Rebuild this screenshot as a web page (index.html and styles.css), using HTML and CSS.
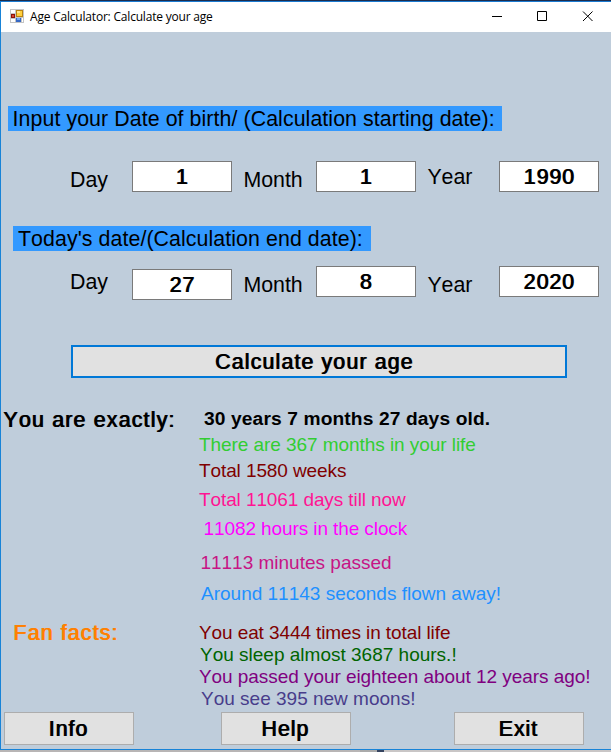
FILE: index.html
```html
<!DOCTYPE html>
<html lang="en">
<head>
<meta charset="utf-8">
<title>Age Calculator: Calculate your age</title>
<link rel="stylesheet" href="styles.css">
</head>
<body>
<div class="window">
  <header class="titlebar">
    <svg class="app-icon" width="14" height="14" viewBox="0 0 14 14" shape-rendering="crispEdges">
      <path fill="#c4c4c4" d="M0 0h14v14H0z"/>
      <path fill="#fff" d="M1 1h4v3H1zM1 10h4v3H1zM12 9h1v4h-1z"/>
      <path fill="#8c1208" d="M1 5h4v4H1z"/><path fill="#d8452f" d="M2 6h2v2H2z"/>
      <path fill="#b88312" d="M6 1h7v7H6z"/><path fill="#ffcf3d" d="M7 2h5v5H7z"/><path fill="#ffe58a" d="M7 2h3v2H7z"/>
      <path fill="#3568c5" d="M6 9h5v4H6z"/><path fill="#75a9f2" d="M7 9h3v2H7z"/>
    </svg>
    <span class="title">Age Calculator: Calculate your age</span>
    <svg class="controls" width="106" height="12" viewBox="0 0 106 12">
      <g fill="none" stroke="#000">
        <path d="M0 5.5h10M45.500 .5h9v9h-9z"/>
        <path d="M91 .5l9.500 9.500M100.500 .5L91 10"/>
      </g>
    </svg>
  </header>
  <main>
    <h2 class="band band-birth">Input your Date of birth/ (Calculation starting date):</h2>
    <div class="fields fields-birth">
      <span class="low">Day</span><div class="box">1</div>
      <span class="low">Month</span><div class="box">1</div>
      <span>Year</span><div class="box">1990</div>
    </div>
    <h2 class="band band-today">Today's date/(Calculation end date):</h2>
    <div class="fields fields-today">
      <span>Day</span><div class="box low">27</div>
      <span class="low">Month</span><div class="box">8</div>
      <span class="low">Year</span><div class="box">2020</div>
    </div>
    <button class="calculate">Calculate your age</button>
    <section class="result">
      <h3 class="exactly">You are exactly:</h3>
      <div class="lines">
        <p class="age">30 years 7 months 27 days old.</p>
        <p class="months">There are 367 months in your life</p>
        <p class="weeks">Total 1580 weeks</p>
        <p class="days">Total 11061 days till now</p>
        <p class="hours">11082 hours in the clock</p>
        <p class="minutes">11113 minutes passed</p>
        <p class="seconds">Around 11143 seconds flown away!</p>
      </div>
    </section>
    <section class="facts">
      <h3 class="fan">Fan facts:</h3>
      <div class="lines">
        <p class="eat">You eat 3444 times in total life</p>
        <p class="sleep">You sleep almost 3687 hours.!</p>
        <p class="eighteen">You passed your eighteen about 12 years ago!</p>
        <p class="moons">You see 395 new moons!</p>
      </div>
    </section>
    <footer class="actions">
      <button>Info</button><button>Help</button><button>Exit</button>
    </footer>
  </main>
</div>
<div class="behind"></div>
</body>
</html>
```
FILE: styles.css
```css
* { box-sizing: border-box; margin: 0; padding: 0; }
body {
  width: 611px;
  height: 752px;
  overflow: hidden;
  background: #c6c6c8;
  font: 21.33px/25px "Liberation Sans", Arial, sans-serif;
  font-kerning: none;
  color: #000;
  white-space: nowrap;
}
.window {
  height: 750px;
  border-top: 1px solid #1c2c4c;
  background: #bfcddb;
}
.titlebar {
  display: flex;
  align-items: flex-start;
  height: 31px;
  background: #fff;
  border-top: 1px solid #1a7ad0;
  border-left: 1px solid #1883d7;
}
.app-icon { margin: 7px 6px 0 9px; }
.title {
  font: 12px/16px "Open Sans", "Noto Sans", sans-serif;
  margin-top: 7px;
  width: 462px;
  letter-spacing: -0.2px;
}
.controls { margin-top: 9px; }
main {
  display: flow-root;
  height: 718px;
  border-left: 1px solid #1883d7;
  border-bottom: 1px solid #1883d7;
}
h2, h3 { font-size: 21.33px; font-weight: 400; }
.band { background: #39f; height: 25px; line-height: 27px; letter-spacing: 0.08px; }
.band-birth { width: 494px; margin: 74px 0 0 7px; padding-left: 4.6px; }
.band-today { width: 358px; margin: 34px 0 0 12px; padding-left: 5px; }
.fields {
  display: grid;
  grid-template-columns: 62px 100px 84px 100px 83px 100px;
  align-items: start;
  padding-left: 69px;
}
.fields-birth { height: 31px; margin-top: 30px; }
.fields-today { height: 34px; margin-top: 15px; }
.fields span { line-height: 33px; }
.fields span:nth-of-type(n+2) { padding-left: 11.4px; }
.fields .low { margin-top: 3px; }
.box {
  height: 31px;
  border: 1px solid #7a7a7a;
  background: #fff;
  line-height: 31px;
  text-align: center;
}
.box, button, .exactly, .fan {
  letter-spacing: 1px;
  text-shadow: 1px 0 currentColor;
}
button {
  display: block;
  font: inherit;
  font-kerning: none;
  letter-spacing: 1px;
  color: #000;
  height: 33px;
  padding: 2px 2px 0 0;
  background: #e1e1e1;
  border: 1px solid #adadad;
}
.calculate { width: 496px; margin: 45px 0 0 70px; border: 2px solid #0078d7; padding-right: 10px; letter-spacing: 1.15px; }
.result, .facts { display: grid; grid-template-columns: 198px 1fr; }
.result { height: 206px; margin-top: 30px; }
.facts { height: 88px; margin-top: 8px; }
.exactly { padding-left: 2px; letter-spacing: 1.2px; }
.fan { padding-left: 12px; color: #ff8000; margin-top: -1px; letter-spacing: 1.15px; }
.lines p { font-size: 19px; line-height: 22px; letter-spacing: -0.1px; }
.lines .age { padding-left: 5px; font-size: 19.2px; font-weight: 700; letter-spacing: 0.12px; }
.lines .months { margin-top: 4px; color: #32cd32; letter-spacing: -0.06px; }
.weeks { margin-top: 4px; color: maroon; }
.days { margin-top: 7px; color: #ff1493; }
.hours { margin-top: 7px; padding-left: 4.6px; color: #f0f; }
.lines .minutes { margin-top: 12px; padding-left: 1.4px; color: #c71585; letter-spacing: 0; }
.lines .seconds { margin-top: 9px; padding-left: 2px; color: #1e90ff; letter-spacing: 0; }
.eat { color: maroon; }
.lines .sleep { padding-left: 1px; color: #006400; letter-spacing: 0; }
.lines .eighteen { color: purple; letter-spacing: -0.06px; }
.lines .moons { padding-left: 2px; color: #483d8b; letter-spacing: 0; }
.actions { display: flex; padding-left: 3px; margin-top: 2px; }
.actions button { width: 130px; }
.actions button:nth-child(2) { margin-left: 87px; }
.actions button:nth-child(3) { margin-left: 103px; }
.behind {
  height: 2px;
  background: linear-gradient(90deg, #b8b5b5 360px, #aaa 360px 377px, #34435f 377px 384px, #c9c6c6 384px);
}
```
